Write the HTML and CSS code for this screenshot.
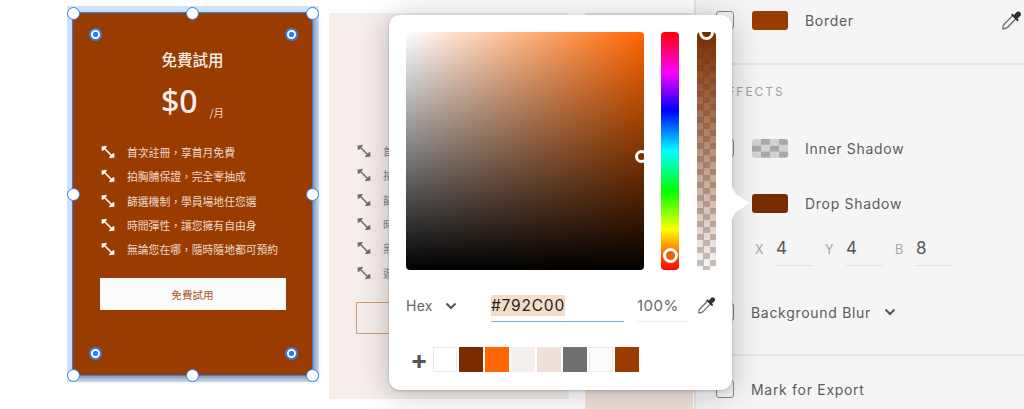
FILE: index.html
```html
<!DOCTYPE html>
<html lang="zh-Hant">
<head>
<meta charset="utf-8">
<title>Plan card colour editing</title>
<link rel="stylesheet" href="styles.css">
</head>
<body>
<svg class="defs" width="0" height="0" aria-hidden="true">
  <symbol id="expand" viewBox="0 0 14 14">
    <path d="M2.500 2.500 11.500 11.500" fill="none" stroke="currentColor" stroke-width="1.600"/>
    <path d="M.5 1.500 6 .8 5.200 2.600 2.600 5.200 .8 6ZM13.500 12.500 8 13.200 8.800 11.400 11.400 8.800 13.200 8Z" fill="currentColor"/>
  </symbol>
  <symbol id="dropper" viewBox="0 0 24 24">
    <path d="M12.500 7.500 3.500 16.500Q1.800 18.500 2 21.500 5 21.800 7 20.200L16 11" fill="none" stroke="currentColor" stroke-width="1.500"/>
    <path d="M11 6.500 12.500 5 14 6.500 17.500 3A3 3 0 0 1 21.500 7L18 10.500 19.500 12 18 13.500Z" fill="#333"/>
  </symbol>
  <symbol id="chevron" viewBox="0 0 12 8">
    <path d="M1.500 1.500 6 6 10.500 1.500" fill="none" stroke="currentColor" stroke-width="2"/>
  </symbol>
</svg>

<main class="canvas">
  <div class="band"></div>

  <section class="card-selected">
    <h2 class="plan-title">免費試用</h2>
    <div class="price"><span class="amount">$0</span><span class="per">/月</span></div>
    <ul class="features">
      <li><svg class="ico"><use href="#expand"/></svg>首次註冊，享首月免費</li>
      <li><svg class="ico"><use href="#expand"/></svg>拍胸脯保證，完全零抽成</li>
      <li><svg class="ico"><use href="#expand"/></svg>篩選機制，學員場地任您選</li>
      <li><svg class="ico"><use href="#expand"/></svg>時間彈性，讓您擁有自由身</li>
      <li><svg class="ico"><use href="#expand"/></svg>無論您在哪，隨時隨地都可預約</li>
    </ul>
    <div class="cta">免費試用</div>
    <i class="h h-tl"></i><i class="h h-tc"></i><i class="h h-tr"></i>
    <i class="h h-ml"></i><i class="h h-mr"></i>
    <i class="h h-bl"></i><i class="h h-bc"></i><i class="h h-br"></i>
    <i class="r r-tl"></i><i class="r r-tr"></i><i class="r r-bl"></i><i class="r r-br"></i>
  </section>

  <section class="card-light">
    <ul class="features features-light">
      <li><svg class="ico"><use href="#expand"/></svg>首次註冊</li>
      <li><svg class="ico"><use href="#expand"/></svg>拍胸脯保證</li>
      <li><svg class="ico"><use href="#expand"/></svg>篩選機制</li>
      <li><svg class="ico"><use href="#expand"/></svg>時間彈性</li>
      <li><svg class="ico"><use href="#expand"/></svg>無論您在哪</li>
      <li><svg class="ico"><use href="#expand"/></svg>遊刃有餘</li>
    </ul>
    <div class="cta-outline"></div>
  </section>

  <div class="card-third"></div>

  <aside class="panel">
    <div class="row row-border">
      <span class="check"></span><span class="swatch swatch-border"></span><span class="label">Border</span>
      <svg class="panel-dropper"><use href="#dropper"/></svg>
    </div>
    <hr class="rule rule-a">
    <div class="section-title">EFFECTS</div>
    <div class="row row-inner">
      <span class="check"></span><span class="swatch swatch-checker"></span><span class="label">Inner Shadow</span>
    </div>
    <div class="row row-drop">
      <span class="check"></span><span class="swatch swatch-drop"></span><span class="label">Drop Shadow</span>
    </div>
    <div class="xyb">
      <span class="axis">X</span><span class="val">4</span>
      <span class="axis">Y</span><span class="val">4</span>
      <span class="axis">B</span><span class="val">8</span>
    </div>
    <div class="row row-blur">
      <span class="check"></span><span class="label">Background Blur</span>
      <svg class="chev"><use href="#chevron"/></svg>
    </div>
    <hr class="rule rule-b">
    <div class="row row-export">
      <span class="check"></span><span class="label">Mark for Export</span>
    </div>
  </aside>

  <section class="popover">
    <svg class="tail" viewBox="0 0 20 44" width="20" height="44"><path d="M0 0Q1 8 5 13L19 22 5 31Q1 36 0 44Z" fill="#fff"/></svg>
    <div class="pickers">
      <div class="sv"><i class="knob knob-sv"></i></div>
      <div class="hue"><i class="knob knob-hue"></i></div>
      <div class="alpha"><i class="knob knob-alpha"></i></div>
    </div>
    <div class="values">
      <span class="mode">Hex</span>
      <svg class="chev chev-mode"><use href="#chevron"/></svg>
      <div class="hex"><span class="hex-sel">#792C00</span></div>
      <div class="pct">100%</div>
      <svg class="pop-dropper"><use href="#dropper"/></svg>
    </div>
    <div class="swatches">
      <span class="plus">+</span>
      <i class="sw sw-1"></i><i class="sw sw-2"></i><i class="sw sw-3"></i><i class="sw sw-4"></i>
      <i class="sw sw-5"></i><i class="sw sw-6"></i><i class="sw sw-7"></i><i class="sw sw-8"></i>
    </div>
  </section>
</main>
</body>
</html>
```

FILE: styles.css
```css
* { box-sizing: border-box; }
html, body { margin: 0; padding: 0; }
body { width: 1024px; height: 409px; overflow: hidden; background: #fff; font-family: "Noto Sans CJK TC", "Noto Sans", sans-serif; }
.defs { position: absolute; }
.canvas { position: relative; width: 1024px; height: 409px; overflow: hidden; background: #fff; }

/* free canvas artboards */
.band { position: absolute; left: 67px; top: 6px; width: 252px; height: 376px; background: #cfe3fa; }
.card-selected {
  position: absolute; left: 73px; top: 13px; width: 239px; height: 362px;
  display: flex; flex-direction: column; align-items: center;
  background: #9a3c00; color: #fff; outline: 1.5px solid #2f80ed;
  box-shadow: 3px 3px 6px rgba(40, 40, 60, .55);
}
.plan-title { margin: 35px 0 0; font-size: 15.500px; line-height: 22px; font-weight: 500; color: #f7efe9; }
.price { display: flex; align-items: flex-end; height: 50px; margin: 6px 0 0; color: #f5eeeb; }
.amount { font-size: 32px; line-height: 50px; font-weight: 500; font-family: "Noto Sans", sans-serif; }
.per { margin: 0 0 5px 12px; font-size: 10.500px; line-height: 16px; color: #ecd8cc; }
.features { list-style: none; margin: 14px 0 0; padding: 0 0 0 28px; width: 100%; font-size: 10.800px; color: #eed9cc; }
.features li { display: flex; align-items: center; height: 24.300px; white-space: nowrap; }
.ico { width: 14px; height: 14px; margin-right: 12px; color: #fff; flex: none; }
.cta {
  width: 186px; height: 32px; margin-top: 17px;
  display: flex; align-items: center; justify-content: center;
  background: #fbfbfb; color: #a9572c; font-size: 10.600px;
}

/* selection handles */
.h { position: absolute; width: 13px; height: 13px; border-radius: 50%; background: #fff; border: 1.500px solid #2f80ed; margin: -6.500px 0 0 -6.500px; }
.h-tl { left: 0; top: 0; } .h-tc { left: 50%; top: 0; } .h-tr { left: 100%; top: 0; }
.h-ml { left: 0; top: 50%; } .h-mr { left: 100%; top: 50%; }
.h-bl { left: 0; top: 100%; } .h-bc { left: 50%; top: 100%; } .h-br { left: 100%; top: 100%; }
.r { position: absolute; width: 13px; height: 13px; border-radius: 50%; background: radial-gradient(circle, #2f80ed 0 2.500px, #fff 3px); border: 2px solid #2f80ed; }
.r-tl { left: 16px; top: 15px; } .r-tr { left: 212px; top: 15px; }
.r-bl { left: 16px; top: 334px; } .r-br { left: 212px; top: 334px; }

.card-light { position: absolute; left: 329px; top: 13px; width: 240px; height: 386px; background: #f5eeeb; padding-top: 126px; }
.features-light { margin: 0; color: #888; }
.features-light .ico { color: #6f6f6f; }
.cta-outline { width: 186px; height: 32px; margin: 17px 0 0 27px; border: 1px solid #d49a78; }
.card-third { position: absolute; left: 585px; top: 13px; width: 108px; height: 396px; background: #f1e2db; }

/* inspector */
.panel { position: absolute; left: 694px; top: 0; width: 330px; height: 409px; background: #f5f5f5; border-left: 2px solid #e6e6e6; color: #5c5c5c; font-family: Inter, "Noto Sans", sans-serif; font-size: 14px; }
.row { display: flex; align-items: center; height: 20px; padding-left: 20px; }
.check { width: 18px; height: 18px; border: 1.500px solid #8a8a8a; border-radius: 3px; flex: none; margin-right: 18px; }
.swatch { width: 36px; height: 19px; border-radius: 3px; margin-right: 17px; flex: none; }
.swatch-border { background: #9a3c00; }
.swatch-drop { background: #792c00; }
.swatch-checker { background: repeating-conic-gradient(#a9a9a9 0 25%, #d2d2d2 0 50%) 0 0 / 18px 12.600px; }
.label { letter-spacing: .7px; white-space: nowrap; }
.row-border { margin-top: 10px; position: relative; }
.panel-dropper { position: absolute; left: 305px; top: -1px; width: 22px; height: 22px; color: #6a6a6a; }
.rule { height: 2px; margin: 0; border: 0; background: #e6e6e6; }
.rule-a { margin-top: 33px; }
.section-title { margin: 20px 0 0 22px; font-size: 12px; line-height: 14px; letter-spacing: 2px; color: #a2a2a2; }
.row-inner { margin-top: 39px; }
.row-drop { margin-top: 35px; }
.xyb { display: flex; align-items: flex-start; height: 29px; margin: 24px 0 0 59px; }
.axis { width: 21px; font-size: 12.500px; line-height: 25px; color: #a5a5a5; }
.val { width: 37px; height: 29px; margin-right: 12px; font-size: 17px; line-height: 23px; border-bottom: 1.500px solid #e2e2e2; color: #555; }
.row-blur { margin-top: 36px; }
.row-blur .check, .row-export .check { margin-right: 17px; }
.chev { width: 12px; height: 8px; margin-left: 13px; color: #555; flex: none; }
.rule-b { margin-top: 32px; }
.row-export { margin-top: 23px; }

/* colour popover */
.popover { position: absolute; left: 389px; top: 15px; width: 343px; height: 375px; padding: 17px; background: #fff; border-radius: 11px; box-shadow: 0 1px 3px rgba(0,0,0,.2), 0 3px 32px rgba(0,0,0,.24); color: #666; font-family: Inter, "Noto Sans", sans-serif; }
.tail { position: absolute; left: 342px; top: 166px; }
.pickers { display: flex; height: 238px; }
.pickers > div { flex: none; }
.sv { position: relative; width: 238px; height: 238px; border-radius: 4px; background: linear-gradient(to top, #000, rgba(0,0,0,0)), linear-gradient(to right, #fff, #ff6600); }
.hue { position: relative; width: 18px; margin-left: 17px; border-radius: 4px; background: linear-gradient(to bottom, #f00 0%, #f0f 17%, #00f 33%, #0ff 50%, #0f0 67%, #ff0 83%, #f00 100%); }
.alpha { position: relative; width: 19px; margin-left: 18px; border-radius: 4px; overflow: hidden; background: linear-gradient(to bottom, #792c00, rgba(121,44,0,.04)), repeating-conic-gradient(#c9c9c9 0 25%, #fff 0 50%) 0 0 / 13px 13px; }
.knob { position: absolute; width: 15px; height: 15px; border-radius: 50%; border: 3px solid #fff; margin: -7.500px 0 0 -7.500px; }
.knob-sv { left: 235px; top: 124px; width: 13px; height: 13px; margin: -6.500px 0 0 -6.500px; }
.knob-hue { left: 9px; top: 223px; background: #e8640a; }
.knob-alpha { left: 9.500px; top: 0; background: #792c00; }
.values { display: flex; align-items: flex-start; height: 50px; margin-top: 22px; }
.values > * { flex: none; }
.mode { width: 39px; font-size: 14px; line-height: 27px; letter-spacing: .3px; }
.chev-mode { margin: 10px 0 0 0; color: #555; }
.hex { width: 133px; height: 30px; margin-left: 34px; border-bottom: 1.500px solid #6ab0e8; }
.hex-sel { display: inline-block; height: 21px; background: #f5dcc4; color: #222; font-size: 15.500px; line-height: 21px; letter-spacing: .8px; vertical-align: top; margin-top: 3px; }
.pct { width: 50px; height: 30px; margin-left: 13px; font-size: 15px; line-height: 27px; letter-spacing: .5px; border-bottom: 1.500px solid #ececec; }
.pop-dropper { width: 20px; height: 20px; margin: 3px 0 0 10px; color: #6a6a6a; }
.swatches { display: flex; align-items: center; height: 25px; margin-top: 5px; padding-left: 3px; gap: 2px; }
.plus { width: 20px; margin-right: 2px; font-size: 26px; line-height: 25px; font-weight: 700; color: #555; text-align: center; }
.sw { width: 24px; height: 24.500px; }
.sw-1 { background: #fff; border: 1.500px solid #eaeaea; }
.sw-2 { background: #792c00; }
.sw-3 { background: #ff6600; }
.sw-4 { background: #f5f0ed; }
.sw-5 { background: #f0e0da; }
.sw-6 { background: #707070; }
.sw-7 { background: #fbfbfb; border: 1.500px solid #eaeaea; }
.sw-8 { background: #9a3c00; }
```
